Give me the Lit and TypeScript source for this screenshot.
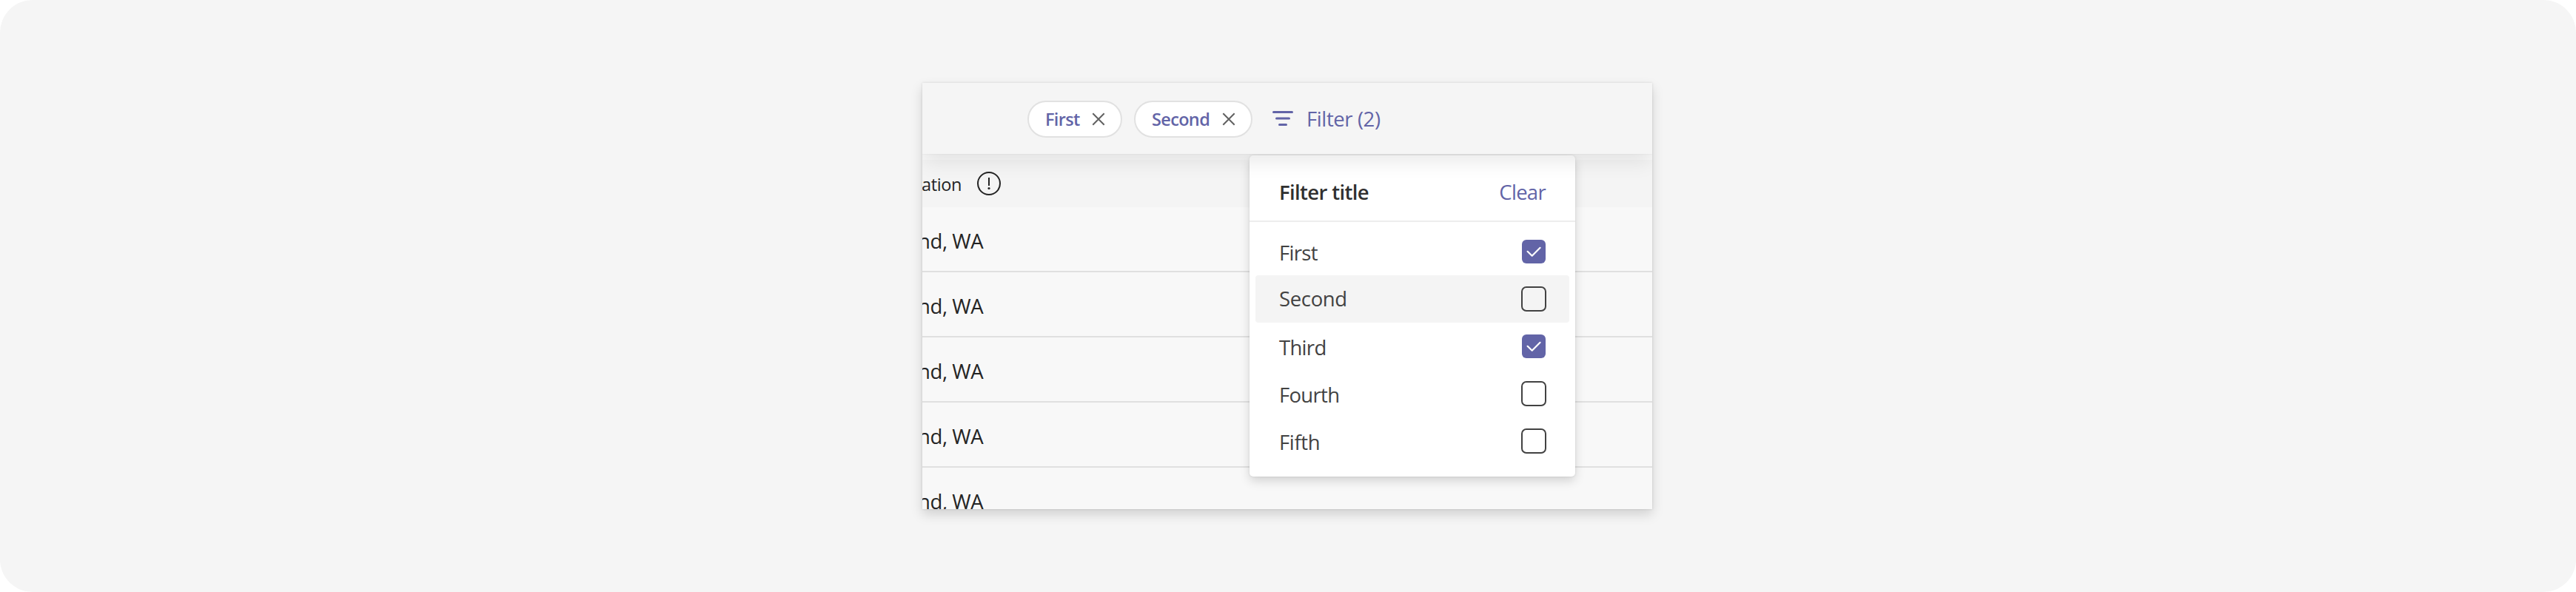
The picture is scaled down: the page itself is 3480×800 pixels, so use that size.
import { LitElement, html, css, svg } from "lit";
import { customElement, property, state } from "lit/decorators.js";
import { classMap } from "lit/directives/class-map.js";

@customElement("filter-chip")
class FilterChip extends LitElement {
  @property() label = "";

  static styles = css`
    :host { display: block; }
    .chip {
      box-sizing: border-box;
      height: 50px;
      display: flex;
      align-items: center;
      justify-content: space-between;
      padding: 0 21px 0 22px;
      border: 2px solid #e1e1e1;
      border-radius: 25px;
      background: #fff;
      color: #6264a7;
      font-size: 23.5px;
      font-weight: 600;
      letter-spacing: -0.65px;
      line-height: 46px;
    }
    svg { display: block; }
  `;

  render() {
    return html`<div class="chip">
      <span>${this.label}</span>
      <svg width="18" height="18" viewBox="0 0 18 18" fill="none" stroke="#616161" stroke-width="2">
        <path d="M1.300 1.300 16.700 16.700M16.700 1.300 1.300 16.700" />
      </svg>
    </div>`;
  }
}

@customElement("filter-option")
class FilterOption extends LitElement {
  @property() label = "";
  @property({ type: Boolean }) checked = false;
  @property({ type: Boolean }) hovered = false;

  static styles = css`
    :host { display: block; }
    .option {
      box-sizing: border-box;
      height: 64px;
      display: flex;
      align-items: flex-start;
      justify-content: space-between;
      padding: 0 31px 0 32px;
      border-radius: 4px;
      color: #424242;
      font-size: 27.5px;
    }
    .hovered { background: #f4f4f4; }
    .label { line-height: 63px; padding-top: 2px; }
    .hovered .label { padding-top: 0; }
    svg { display: block; align-self: center; }
  `;

  render() {
    return html`<div class=${classMap({ option: true, hovered: this.hovered })}>
      <span class="label">${this.label}</span>
      <svg width="34" height="34" viewBox="0 0 34 34" fill="none">
        ${this.checked
          ? svg`<rect x="1" y="1" width="32" height="32" rx="6" fill="#6264a7" />
              <path d="M8.600 16.800 14.700 22.700 25.600 11.800" stroke="#fff" stroke-width="2.200" stroke-linecap="round" stroke-linejoin="round" />`
          : svg`<rect x="1" y="1" width="32" height="32" rx="6" stroke="#424242" stroke-width="2" />`}
      </svg>
    </div>`;
  }
}

@customElement("app-root")
class AppRoot extends LitElement {
  @state() chips = [
    { label: "First", width: 128 },
    { label: "Second", width: 160 },
  ];
  @state() rows = ["nd, WA", "nd, WA", "nd, WA", "nd, WA", "nd, WA"];
  @state() options = [
    { label: "First", checked: true, tight: true },
    { label: "Second", hovered: true },
    { label: "Third", checked: true, tight: true },
    { label: "Fourth", tight: true },
    { label: "Fifth" },
  ];

  static styles = css`
    :host {
      display: block;
      font-family: "Open Sans", "Noto Sans", sans-serif;
      background: #fff;
    }
    .stage {
      box-sizing: border-box;
      height: 800px;
      padding: 112px 0 0 1246px;
      border-radius: 44px;
      background: #f5f5f5;
    }
    .card {
      width: 986px;
      height: 576px;
      box-shadow: 0 0 3px rgba(0, 0, 0, 0.12), 0 7px 15px rgba(0, 0, 0, 0.15);
    }
    .clip {
      position: relative;
      height: 576px;
      overflow: hidden;
      background: #f8f8f8;
    }
    .toolbar {
      position: relative;
      z-index: 2;
      box-sizing: border-box;
      height: 96px;
      display: flex;
      align-items: flex-start;
      padding: 24px 0 0 142px;
      background: #f5f5f5;
      box-shadow: 0 0 2px rgba(0, 0, 0, 0.08), 0 12px 26px -2px rgba(0, 0, 0, 0.09);
    }
    .chips { display: flex; gap: 16px; }
    .trigger {
      display: flex;
      align-items: center;
      gap: 18px;
      height: 49px;
      margin-left: 27px;
      color: #6264a7;
      font-size: 27.5px;
      letter-spacing: -0.4px;
      line-height: 49px;
    }
    .trigger svg { display: block; margin-top: -1px; }
    .columns {
      box-sizing: border-box;
      height: 64px;
      display: flex;
      align-items: flex-start;
      margin-top: 8px;
      padding-top: 16px;
      background: #f4f4f4;
      color: #242424;
      font-size: 23.5px;
      letter-spacing: -0.35px;
      line-height: 32px;
    }
    .columns svg { display: block; }
    .column { width: 75px; margin: 1px 0 0 -1px; }
    .row {
      box-sizing: border-box;
      height: 88px;
      border-bottom: 2px solid #e0e0e0;
      color: #242424;
      font-size: 27.5px;
      letter-spacing: -0.4px;
      line-height: 91px;
    }
    .cell { margin-left: -6px; }
    .popup {
      position: absolute;
      z-index: 1;
      left: 442px;
      top: 98px;
      box-sizing: border-box;
      width: 440px;
      height: 434px;
      border-radius: 5px;
      background: #fff;
      box-shadow: 0 0 3px rgba(0, 0, 0, 0.1), 0 6px 14px rgba(0, 0, 0, 0.15);
    }
    .head {
      box-sizing: border-box;
      height: 90px;
      display: flex;
      align-items: flex-start;
      justify-content: space-between;
      padding: 31px 40px 0;
      border-bottom: 2px solid #ededed;
      font-size: 27.5px;
      line-height: 37px;
    }
    .title { font-weight: 600; color: #303030; letter-spacing: -0.65px; }
    .clear { color: #6264a7; letter-spacing: -0.7px; }
    .options { padding: 8px; }
    .regular { letter-spacing: -0.35px; }
    .tight { letter-spacing: -0.7px; }
  `;

  render() {
    return html`<div class="stage"><div class="card"><div class="clip">
      <div class="toolbar">
        <div class="chips">
          ${this.chips.map((c) => html`<filter-chip label=${c.label} style="width:${c.width}px"></filter-chip>`)}
        </div>
        <div class="trigger">
          <svg width="28" height="20" viewBox="0 0 28 20" stroke="#6264a7" stroke-width="3" stroke-linecap="round">
            <path d="M1.500 1.500H26.500M5.500 10H22.500M9.500 18.500H18.500" />
          </svg>
          <span>Filter (2)</span>
        </div>
      </div>
      <div class="columns">
        <span class="column">ation</span>
        <svg width="32" height="32" viewBox="0 0 32 32" fill="none" stroke="#242424" stroke-width="2">
          <circle cx="16" cy="16" r="15" />
          <path d="M16 8V19" />
          <circle cx="16" cy="22.500" r="1.600" fill="#242424" stroke="none" />
        </svg>
      </div>
      ${this.rows.map((r) => html`<div class="row"><span class="cell">${r}</span></div>`)}
      <div class="popup">
        <div class="head">
          <span class="title">Filter title</span>
          <span class="clear">Clear</span>
        </div>
        <div class="options">
          ${this.options.map((o) => html`<filter-option
            class=${o.tight ? "tight" : "regular"}
            label=${o.label}
            ?checked=${!!o.checked}
            ?hovered=${!!o.hovered}
          ></filter-option>`)}
        </div>
      </div>
    </div></div></div>`;
  }
}
